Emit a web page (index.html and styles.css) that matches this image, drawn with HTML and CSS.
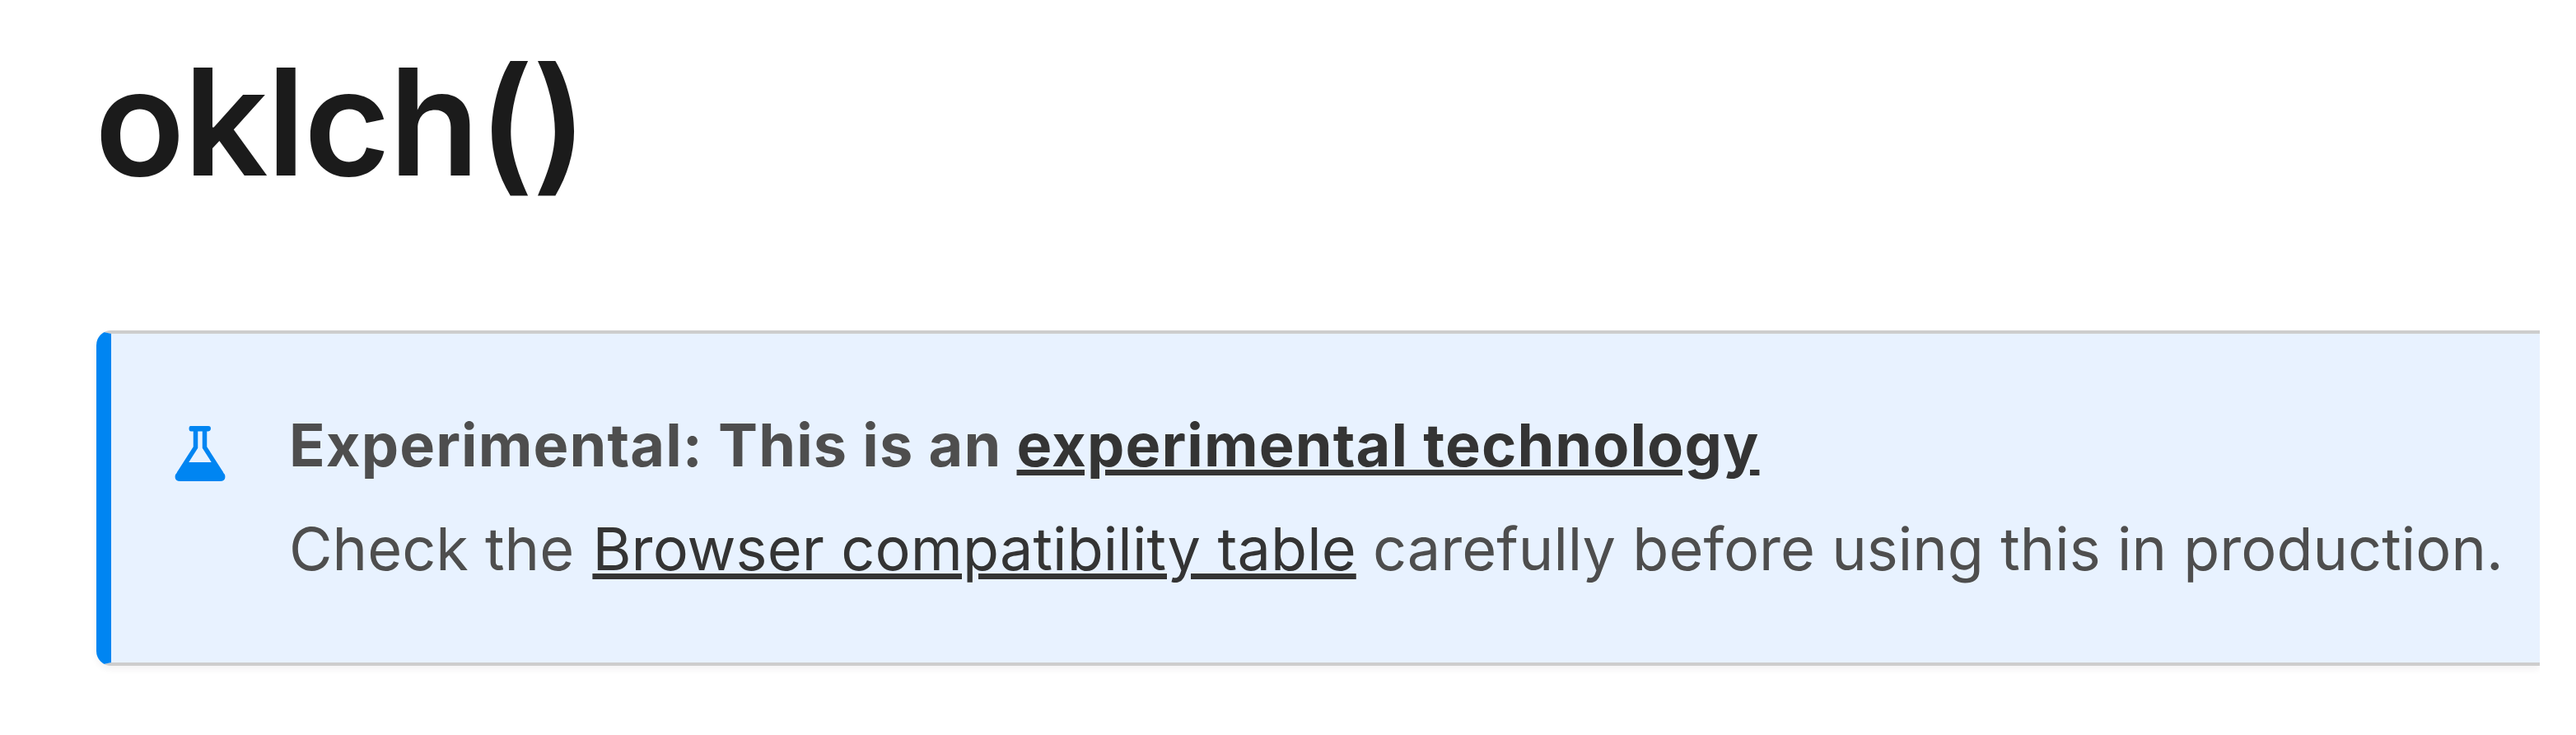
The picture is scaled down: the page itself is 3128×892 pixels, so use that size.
FILE: index.html
```html
<!DOCTYPE html>
<html lang="en">
<head>
<meta charset="utf-8">
<title>oklch()</title>
<link rel="stylesheet" href="styles.css">
</head>
<body>
<main class="page">
<h1 class="title">oklch()</h1>
<section class="notice">
<svg class="flask" viewBox="0 0 62 67" aria-hidden="true">
<path class="glass" d="M25.500 5V26L5 58M36.500 5V26L57 58"/>
<path class="liquid" d="M20 0H41Q44 0 44 3T41 6.500H20Q17.500 6.500 17.500 3T20 0ZM13 44H49L61 59Q63 67 55 67H7Q-1 67 1 59Z"/>
</svg>
<div class="copy">
<p class="heading">Experimental: This is an <a class="link" href="#">experimental technology</a></p>
<p class="text">Check the <a class="link" href="#">Browser compatibility table</a> carefully before using this in production.</p>
</div>
</section>
</main>
</body>
</html>
```
FILE: styles.css
```css
body {
  margin: 0;
  background: #fff;
  font-family: Inter, sans-serif;
  overflow: hidden;
}
.page {
  width: 3084px;
  box-sizing: border-box;
  padding: 39px 0 60px 117px;
  overflow: hidden;
}
.title {
  margin: 0 0 0 -2px;
  height: 362px;
  font-size: 180px;
  line-height: 218px;
  font-weight: 610;
  letter-spacing: -1.7px;
  color: #1b1b1b;
}
.notice {
  box-sizing: border-box;
  height: 407px;
  display: flex;
  border: 4.5px solid #cdcdcd;
  border-left: 18px solid #0085f2;
  border-right: 0;
  border-radius: 18px 0 0 18px;
  background: #e8f2ff;
  box-shadow: 0 4px 9px rgba(43, 42, 51, 0.06);
}
.flask {
  width: 62px;
  height: 67px;
  margin: 112px 0 0 77px;
}
.glass {
  fill: none;
  stroke: #0085f2;
  stroke-width: 5.500;
}
.liquid {
  fill: #0085f2;
}
.copy {
  padding: 72px 0 0 77px;
  white-space: nowrap;
  color: #4e4e4e;
  font-size: 72px;
  line-height: 126px;
}
.heading, .text {
  margin: 0;
}
.heading {
  font-weight: 680;
  letter-spacing: 1.1px;
}
.text {
  font-weight: 420;
  letter-spacing: 0;
}
.text .link {
  margin-left: 2px;
  letter-spacing: 0.1px;
}
.link {
  color: #343434;
  text-decoration-thickness: 6.5px;
}
```
